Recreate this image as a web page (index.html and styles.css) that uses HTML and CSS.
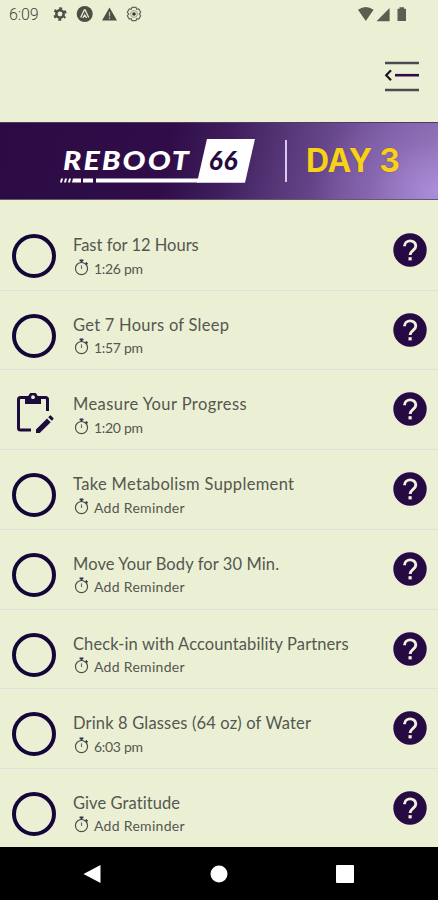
FILE: index.html
```html
<!DOCTYPE html>
<html lang="en">
<head>
<meta charset="utf-8">
<title>Reboot 66</title>
<link rel="stylesheet" href="styles.css">
</head>
<body>
<svg class="defs" aria-hidden="true">
  <symbol id="timer" viewBox="0 0 14 16">
    <circle cx="7" cy="9" r="5.7" fill="none" stroke="#4b4d49" stroke-width="1.1"/>
    <path d="M5.2 1.2h3.6M7 1.5v2M11 3.4l1.6 1.6" fill="none" stroke="#30304a" stroke-width="1.6"/>
    <path d="M7 6v3.4" stroke="#6a6c68" stroke-width="1.1"/>
  </symbol>
  <symbol id="help" viewBox="0 0 34 34">
    <circle cx="17" cy="17" r="16.7" fill="#270944"/>
    <path d="M11.5 13.3c0-7.2 11.3-7.1 11.3-.3 0 4.3-5.7 4.500-5.700 9.100" fill="none" stroke="#f0f2dc" stroke-width="2.9"/>
    <rect x="15.5" y="24.2" width="3.2" height="3.2" fill="#f0f2dc"/>
  </symbol>
</svg>
<div class="screen">
  <div class="status">
    <span class="clock">6:09</span>
    <svg class="notes" width="73" height="18" viewBox="0 0 73 18">
      <g fill="none" stroke="#4c4f43">
        <circle cx="7" cy="9" r="3.7" stroke-width="2.5"/>
        <circle cx="7" cy="9" r="5.6" stroke-width="2.2" stroke-dasharray="2.8 3.064" stroke-dashoffset="1.4" transform="rotate(30 7 9)"/>
      </g>
      <circle cx="31.700" cy="9" r="8" fill="#4c4f43"/>
      <path d="M27.700 12.500 31.300 5h.8l3.600 7.500M29.800 13l1.900-3 1.900 3" fill="none" stroke="#e9eed3" stroke-width="1.300"/>
      <path d="M56.500 2.500 64 15.500H49z" fill="#4c4f43"/>
      <path d="M56.500 7v4.500M56.500 12.500v1.500" stroke="#bcc1a9" stroke-width="1.300"/>
    </svg>
    <svg class="outline-gear" width="16" height="18" viewBox="0 0 16 18">
      <path d="M6 2.300h4l.7 2.100 2-.4 2 3.300-1.500 1.700 1.500 1.700-2 3.300-2-.4-.7 2.100H6l-.7-2.100-2 .4-2-3.300L2.800 9 1.300 7.300l2-3.300 2 .4z" fill="none" stroke="#63665a" stroke-width="1.200"/>
      <circle cx="8" cy="9" r="3.400" fill="none" stroke="#85897a" stroke-width=".8"/>
      <circle cx="8" cy="9" r="1.800" fill="#34372f"/>
    </svg>
    <svg class="signals" width="52" height="18" viewBox="0 0 52 18">
      <path d="M1 4.800Q8.800-.8 16.600 4.800L8.800 16z" fill="#5b5e50"/>
      <path d="M32.600 3v13.300H19.500z" fill="#5b5e50"/>
      <path d="M42.500 2.200h4.500v1.600h2V16h-8.500V3.800h2z" fill="#5b5e50"/>
    </svg>
  </div>
  <header class="toolbar">
    <svg width="36" height="32" viewBox="0 0 36 32">
      <path d="M1 2h34M1 29h34" stroke="#4e4852" stroke-width="2.500"/>
      <path d="M11 14.200h24" stroke="#310a4d" stroke-width="2.600"/>
      <path d="M7 9.200 2.200 14.200 7 19.200" fill="none" stroke="#1b1720" stroke-width="2.200"/>
    </svg>
  </header>
  <section class="banner">
    <div class="brand">
      <div class="brand-row"><span class="word">REBOOT</span><span class="badge">66</span></div>
      <svg class="underline" width="139" height="5" viewBox="0 0 139 5">
        <path d="M1 .5h2L2 4.500H0zM5 .5h2L6 4.500H4zM9 .5h2l-1 4H8zM13 .5h8v4h-9zM23 .5h10v4H23zM36 .5h103v4H36z" fill="#fff"/>
      </svg>
    </div>
    <span class="rule"></span>
    <span class="day">DAY 3</span>
  </section>
  <main class="tasks">
    <article class="task"><span class="mark"><i class="ring"></i></span><div class="info"><h2 class="t1">Fast for 12 Hours</h2><p class="time"><svg><use href="#timer"/></svg><span>1:26 pm</span></p></div><svg class="help"><use href="#help"/></svg></article>
    <article class="task"><span class="mark"><i class="ring"></i></span><div class="info"><h2 class="t2">Get 7 Hours of Sleep</h2><p class="time"><svg><use href="#timer"/></svg><span>1:57 pm</span></p></div><svg class="help"><use href="#help"/></svg></article>
    <article class="task"><span class="mark"><svg width="40" height="42" viewBox="0 0 40 42">
      <path d="M14 4.500H5.500q-2 0-2 2V35q0 2 2 2H16M21 4.500h9.500q2 0 2 2V18" fill="none" stroke="#1c0b3b" stroke-width="3"/>
      <path d="M10 4h3.300a4.700 4.700 0 0 1 9.400 0H26v7H10z" fill="#1c0b3b"/>
      <circle cx="18" cy="4.200" r="1.900" fill="#ebf0d5"/>
      <path d="M21 40v-3.500L32 25.500l3.700 3.700L24.700 40zM33.200 24.200l1.500-1.500q.7-.7 1.400 0l2.200 2.200q.7.700 0 1.400l-1.500 1.500z" fill="#1c0b3b"/>
    </svg></span><div class="info"><h2 class="t3">Measure Your Progress</h2><p class="time"><svg><use href="#timer"/></svg><span>1:20 pm</span></p></div><svg class="help"><use href="#help"/></svg></article>
    <article class="task"><span class="mark"><i class="ring"></i></span><div class="info"><h2 class="t4">Take Metabolism Supplement</h2><p><svg><use href="#timer"/></svg><span>Add Reminder</span></p></div><svg class="help"><use href="#help"/></svg></article>
    <article class="task"><span class="mark"><i class="ring"></i></span><div class="info"><h2 class="t5">Move Your Body for 30 Min.</h2><p><svg><use href="#timer"/></svg><span>Add Reminder</span></p></div><svg class="help"><use href="#help"/></svg></article>
    <article class="task"><span class="mark"><i class="ring"></i></span><div class="info"><h2 class="t6">Check-in with Accountability Partners</h2><p><svg><use href="#timer"/></svg><span>Add Reminder</span></p></div><svg class="help"><use href="#help"/></svg></article>
    <article class="task"><span class="mark"><i class="ring"></i></span><div class="info"><h2 class="t7">Drink 8 Glasses (64 oz) of Water</h2><p class="time"><svg><use href="#timer"/></svg><span>6:03 pm</span></p></div><svg class="help"><use href="#help"/></svg></article>
    <article class="task"><span class="mark"><i class="ring"></i></span><div class="info"><h2 class="t8">Give Gratitude</h2><p><svg><use href="#timer"/></svg><span>Add Reminder</span></p></div><svg class="help"><use href="#help"/></svg></article>
  </main>
  <nav class="navbar">
    <svg width="18" height="20" viewBox="0 0 18 20"><path d="M17.500 1v18L.5 10z" fill="#fff"/></svg>
    <svg width="18" height="18" viewBox="0 0 18 18"><circle cx="9" cy="9" r="8.500" fill="#fff"/></svg>
    <svg width="18" height="18" viewBox="0 0 18 18"><rect width="18" height="18" rx="1" fill="#fff"/></svg>
  </nav>
</div>
</body>
</html>
```
FILE: styles.css
```css
* { box-sizing: border-box; }
body { margin: 0; background: #ebf0d5; font-family: Lato, "Open Sans", sans-serif; font-variant-ligatures: none; }
.defs { position: absolute; width: 0; height: 0; }
.screen { width: 438px; height: 900px; display: flex; flex-direction: column; overflow: hidden; }
.status { height: 28px; display: flex; align-items: center; padding: 0 29px 0 9px; }
.clock { width: 44px; font: 300 16px Roboto, sans-serif; color: #3f4238; letter-spacing: -.1px; }
.notes, .outline-gear { flex: none; }
.signals { margin-left: auto; }
.toolbar { height: 94px; display: flex; justify-content: flex-end; padding: 33px 18px 0 0; }
.banner {
  height: 77.500px; flex: none; display: flex; align-items: center; padding-left: 60px;
  background:
    radial-gradient(ellipse 125px 95px at 100% 90%, rgba(180,150,228,.8), rgba(160,128,205,.35) 55%, transparent),
    linear-gradient(102deg, #2c0b43 0%, #300d49 38%, #3f1d5c 51%, #573778 64%, #735299 80%, #8a6cb0 100%);
  border-top: 1px solid #4e3c60; border-bottom: 1px solid #665775;
}
.brand { width: 195px; display: flex; flex-direction: column; }
.brand-row { display: flex; height: 40px; }
.word { width: 137px; padding-left: 3px; font: italic 900 26.500px/42px Lato, sans-serif; color: #fff; letter-spacing: 1.800px; white-space: nowrap; transform: scaleX(1.145); transform-origin: 3px 50%; }
.badge { width: 58px; height: 44px; background: #fff; clip-path: polygon(10px 0, 100% 0, 48px 100%, 0 100%); text-align: center; font: italic 900 26px/43px Lato, sans-serif; color: #260b40; letter-spacing: 1px; padding-right: 5px; }
.underline { margin-top: -1px; }
.rule { width: 2px; height: 42px; margin-left: 30px; background: #d9c8ef; }
.day { margin-left: 19px; font: 700 32px/40px Inter, sans-serif; letter-spacing: -.2px; color: #f8d11c; white-space: nowrap; text-shadow: 0 0 1px #5c4030; }
.tasks { height: 647.500px; flex: none; padding-top: 11.600px; }
.task { height: 79.700px; display: flex; align-items: flex-start; border-bottom: 1.500px solid #dddfe0; padding-right: 11px; }
.task:last-child { border-bottom: 0; }
.mark { width: 73px; padding: 23px 0 0 12px; display: flex; }
.mark svg { margin: 0 0 0 3px; }
.ring { width: 44px; height: 44px; border: 4px solid #150638; border-radius: 50%; }
.info { flex: 1; padding-top: 23px; }
h2 { margin: 0; font-size: 16.500px; line-height: 22px; font-weight: 400; color: #55574f; white-space: nowrap; }
.t2 { letter-spacing: .26px; }
.t3 { letter-spacing: .42px; }
.t4 { letter-spacing: .34px; }
.t5 { letter-spacing: .1px; }
.t6 { letter-spacing: .1px; }
.t7 { letter-spacing: .16px; }
.t8 { letter-spacing: .08px; }
p { margin: 1px 0 0; display: flex; align-items: center; height: 22px; font-size: 14px; letter-spacing: .3px; color: #55574f; white-space: nowrap; }
.time { letter-spacing: -.3px; }
p svg { width: 15px; height: 17px; margin: -2px 5px 0 1px; }
.help { width: 34px; height: 34px; margin-top: 22px; }
.navbar { height: 53px; flex: none; background: #000; display: flex; align-items: center; justify-content: space-between; padding: 0 84px 0 83px; }
```
